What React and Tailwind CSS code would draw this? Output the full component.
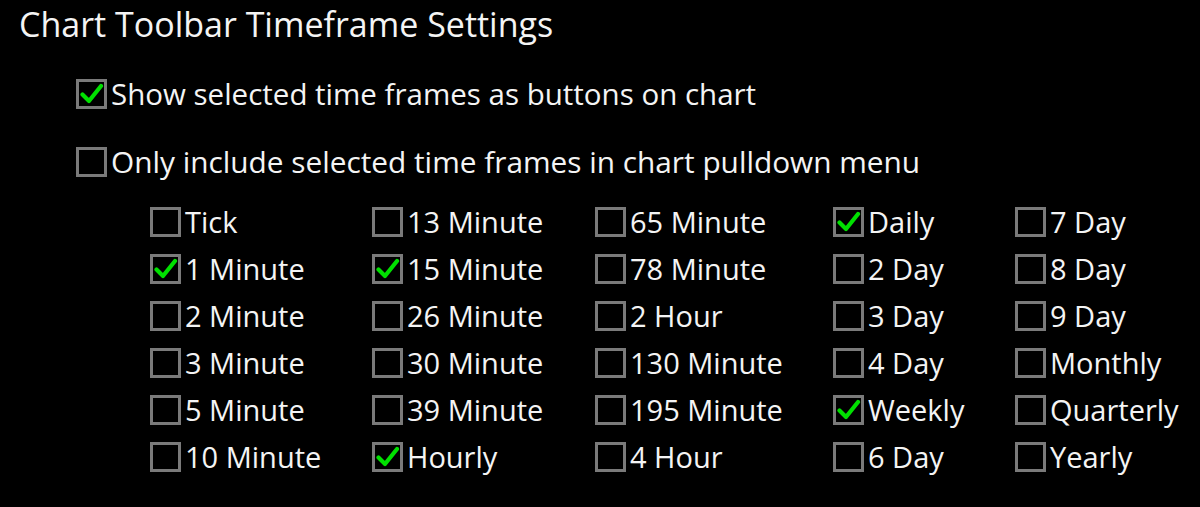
import React from 'react';

const columns = [
  [['Tick', false], ['1 Minute', true], ['2 Minute', false], ['3 Minute', false], ['5 Minute', false], ['10 Minute', false]],
  [['13 Minute', false], ['15 Minute', true], ['26 Minute', false], ['30 Minute', false], ['39 Minute', false], ['Hourly', true]],
  [['65 Minute', false], ['78 Minute', false], ['2 Hour', false], ['130 Minute', false], ['195 Minute', false], ['4 Hour', false]],
  [['Daily', true], ['2 Day', false], ['3 Day', false], ['4 Day', false], ['Weekly', true], ['6 Day', false]],
  [['7 Day', false], ['8 Day', false], ['9 Day', false], ['Monthly', false], ['Quarterly', false], ['Yearly', false]],
];

function Box({ checked }) {
  return (
    <span className="w-[31px] h-[30px] shrink-0 border-[3px] border-[#7a7a7a] bg-black flex items-center justify-center">
      {checked && (
        <svg width="24" height="22" viewBox="0 0 24 22">
          <path d="M2.5 11.5 L9 18 L21 3" fill="none" stroke="#00e000" strokeWidth="4.2" strokeLinecap="round" strokeLinejoin="round" />
        </svg>
      )}
    </span>
  );
}

function Check({ label, checked, size = 'text-[29px]' }) {
  return (
    <div className="flex items-center gap-[4px] h-[47px]">
      <Box checked={checked} />
      <span className={'leading-none ' + size}>{label}</span>
    </div>
  );
}

export default function App() {
  const rows = [0, 1, 2, 3, 4, 5];
  return (
    <div className="w-[1200px] h-[507px] bg-black text-[#f4f4f4] overflow-hidden text-[29px]" style={{ fontFamily: '"Open Sans", "Noto Sans", sans-serif' }}>
      <div className="pl-[19px] pt-[0px] text-[34px] leading-[48px]">Chart Toolbar Timeframe Settings</div>
      <div className="pl-[76px] mt-[22px]">
        <div className="h-[47px] flex items-center"><Check label="Show selected time frames as buttons on chart" size="text-[29.5px]" checked /></div>
        <div className="h-[47px] mt-[21px] flex items-center"><Check label="Only include selected time frames in chart pulldown menu" size="text-[29.8px]" /></div>
      </div>
      <div className="pl-[150px] mt-[13px] grid grid-cols-[222px_223px_238px_182px_auto]">
        {rows.map(r => columns.map((col, c) => (
          <Check key={r + '-' + c} label={col[r][0]} checked={col[r][1]} />
        )))}
      </div>
    </div>
  );
}
